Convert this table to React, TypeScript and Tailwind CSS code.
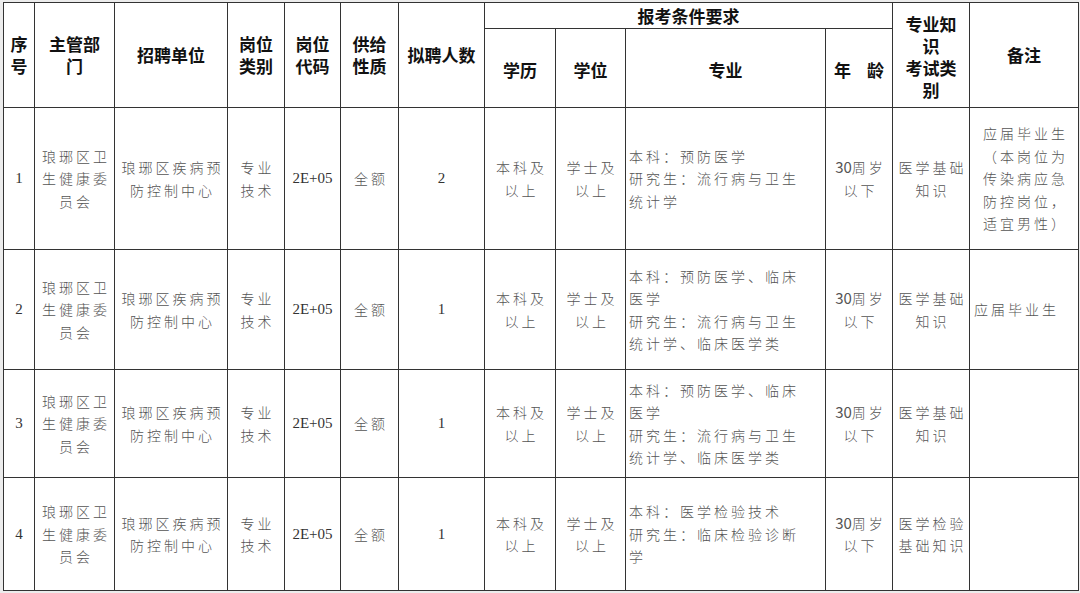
import React from "react"

type Row = {
  no: string
  count: string
  major: string[]
  exam: string[]
  note: string[]
  noteLeft?: boolean
  h: string
}

const rows: Row[] = [
  {
    no: "1",
    count: "2",
    major: ["本科：预防医学", "研究生：流行病与卫生", "统计学"],
    exam: ["医学基础", "知识"],
    note: ["应届毕业生", "（本岗位为", "传染病应急", "防控岗位，", "适宜男性）"],
    h: "h-[142px]",
  },
  {
    no: "2",
    count: "1",
    major: ["本科：预防医学、临床", "医学", "研究生：流行病与卫生", "统计学、临床医学类"],
    exam: ["医学基础", "知识"],
    note: ["应届毕业生"],
    noteLeft: true,
    h: "h-[120px]",
  },
  {
    no: "3",
    count: "1",
    major: ["本科：预防医学、临床", "医学", "研究生：流行病与卫生", "统计学、临床医学类"],
    exam: ["医学基础", "知识"],
    note: [],
    h: "h-[108px]",
  },
  {
    no: "4",
    count: "1",
    major: ["本科：医学检验技术", "研究生：临床检验诊断", "学"],
    exam: ["医学检验", "基础知识"],
    note: [],
    h: "h-[113px]",
  },
]

function Lines({ items }: { items: string[] }) {
  return (
    <>
      {items.map((t, i) => (
        <div key={i} className="whitespace-nowrap">
          {t}
        </div>
      ))}
    </>
  )
}

const th = "border border-[#333] p-0 align-middle text-center font-bold text-[17px] leading-[22px] text-[#111]"
const td = "border border-[#333] p-0 align-middle text-center text-[14px] leading-[22.5px] tracking-[3px] text-[#555] font-light"
const num = "border border-[#333] p-0 align-middle text-center text-[15px] text-[#333] font-['Liberation_Serif','Noto_Sans_CJK_SC',serif]"

export default function App() {
  return (
    <div className="h-[593px] w-[1080px] overflow-hidden bg-[#ececec] pl-[3px] pt-[2px] font-['Noto_Sans_CJK_SC',sans-serif]">
      <table className="w-[1075px] table-fixed border-collapse bg-white">
        <colgroup>
          <col className="w-[31px]" />
          <col className="w-[80px]" />
          <col className="w-[113px]" />
          <col className="w-[57px]" />
          <col className="w-[56px]" />
          <col className="w-[58px]" />
          <col className="w-[86px]" />
          <col className="w-[71px]" />
          <col className="w-[70px]" />
          <col className="w-[200px]" />
          <col className="w-[67px]" />
          <col className="w-[77px]" />
          <col className="w-[109px]" />
        </colgroup>
        <thead>
          <tr className="h-[26px]">
            <th rowSpan={2} className={th}>
              <Lines items={["序", "号"]} />
            </th>
            <th rowSpan={2} className={th}>
              <Lines items={["主管部", "门"]} />
            </th>
            <th rowSpan={2} className={th}>
              招聘单位
            </th>
            <th rowSpan={2} className={th}>
              <Lines items={["岗位", "类别"]} />
            </th>
            <th rowSpan={2} className={th}>
              <Lines items={["岗位", "代码"]} />
            </th>
            <th rowSpan={2} className={th}>
              <Lines items={["供给", "性质"]} />
            </th>
            <th rowSpan={2} className={th}>
              拟聘人数
            </th>
            <th colSpan={4} className={th}>
              报考条件要求
            </th>
            <th rowSpan={2} className={`${th} pt-[3px]`}>
              <Lines items={["专业知", "识", "考试类", "别"]} />
            </th>
            <th rowSpan={2} className={th}>
              备注
            </th>
          </tr>
          <tr className="h-[79px]">
            <th className={`${th} pt-[4px]`}>学历</th>
            <th className={`${th} pt-[4px]`}>学位</th>
            <th className={`${th} pt-[4px]`}>专业</th>
            <th className={`${th} pt-[4px]`}>
              年<span className="inline-block w-[16px]" />龄
            </th>
          </tr>
        </thead>
        <tbody>
          {rows.map((r) => (
            <tr key={r.no} className={r.h}>
              <td className={num}>{r.no}</td>
              <td className={`${td} pl-[3px]`}>
                <Lines items={["琅琊区卫", "生健康委", "员会"]} />
              </td>
              <td className={`${td} pl-[3px]`}>
                <Lines items={["琅琊区疾病预", "防控制中心"]} />
              </td>
              <td className={`${td} pl-[3px]`}>
                <Lines items={["专业", "技术"]} />
              </td>
              <td className={num}>2E+05</td>
              <td className={`${td} pl-[3px]`}>全额</td>
              <td className={num}>{r.count}</td>
              <td className={`${td} pl-[3px]`}>
                <Lines items={["本科及", "以上"]} />
              </td>
              <td className={`${td} pl-[3px]`}>
                <Lines items={["学士及", "以上"]} />
              </td>
              <td className={`${td} pl-[3px] text-left`}>
                <Lines items={r.major} />
              </td>
              <td className={`${td} pl-[3px]`}>
                <div className="whitespace-nowrap">
                  <span className="tracking-normal text-[15px] font-normal">30</span>周岁
                </div>
                <div className="whitespace-nowrap">以下</div>
              </td>
              <td className={`${td} pl-[3px]`}>
                <Lines items={r.exam} />
              </td>
              <td className={`${td} ${r.noteLeft ? "pl-[4px] text-left" : "pl-[3px]"}`}>
                <Lines items={r.note} />
              </td>
            </tr>
          ))}
        </tbody>
      </table>
    </div>
  )
}
